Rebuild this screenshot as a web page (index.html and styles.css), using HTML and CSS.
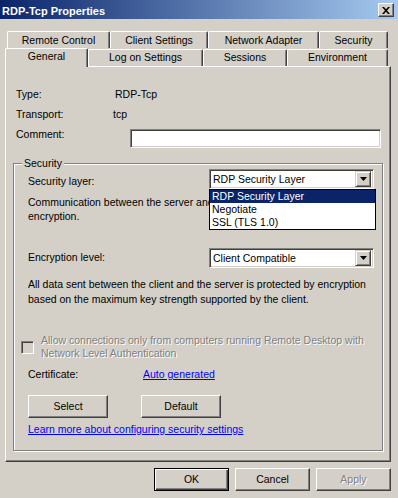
FILE: index.html
```html
<!DOCTYPE html>
<html>
<head>
<meta charset="utf-8">
<title>RDP-Tcp Properties</title>
<link rel="stylesheet" href="styles.css">
</head>
<body>
<div class="window">
  <div class="titlebar">
    <span class="title">RDP-Tcp Properties</span>
    <span class="close"><svg width="8" height="7" viewBox="0 0 8 7"><path d="M0 0h2l2 2.2L6 0h2L5 3.5 8 7H6L4 4.8 2 7H0l3-3.5z" fill="#000"/></svg></span>
  </div>
  <div class="tabs">
    <div class="tabrow back">
      <div class="tab t-remote">Remote Control</div>
      <div class="tab t-client">Client Settings</div>
      <div class="tab t-network">Network Adapter</div>
      <div class="tab t-security">Security</div>
    </div>
    <div class="tabrow front">
      <div class="tab t-general active">General</div>
      <div class="tab t-logon">Log on Settings</div>
      <div class="tab t-sessions">Sessions</div>
      <div class="tab t-env">Environment</div>
    </div>
  </div>
  <div class="panel">
    <div class="info"><span class="info-label">Type:</span><span>RDP-Tcp</span></div>
    <div class="info"><span class="info-label">Transport:</span><span class="tcp">tcp</span></div>
    <div class="info comment"><span class="info-label">Comment:</span><div class="textbox"></div></div>
    <fieldset class="group">
      <legend>Security</legend>
      <div class="field layer-row">
        <span class="field-label">Security layer:</span>
        <div class="combo-wrap">
          <div class="combo"><span class="combo-text">RDP Security Layer</span><span class="combo-btn"><svg width="7" height="4" viewBox="0 0 7 4"><path d="M0 0h7L3.5 4z" fill="#000"/></svg></span></div>
          <ul class="dropdown">
            <li class="sel">RDP Security Layer</li>
            <li>Negotiate</li>
            <li>SSL (TLS 1.0)</li>
          </ul>
        </div>
      </div>
      <p class="desc desc1">Communication between the server and the client will use native RDP<br>encryption.</p>
      <div class="field enc-row">
        <span class="field-label">Encryption level:</span>
        <div class="combo-wrap">
          <div class="combo"><span class="combo-text">Client Compatible</span><span class="combo-btn"><svg width="7" height="4" viewBox="0 0 7 4"><path d="M0 0h7L3.5 4z" fill="#000"/></svg></span></div>
        </div>
      </div>
      <p class="desc desc2">All data sent between the client and the server is protected by encryption<br>based on the maximum key strength supported by the client.</p>
      <div class="check-row">
        <span class="checkbox"></span>
        <span class="disabled-text">Allow connections only from computers running Remote Desktop with<br>Network Level Authentication</span>
      </div>
      <div class="cert-row"><span class="cert-label">Certificate:</span><span class="link">Auto generated</span></div>
      <div class="btn-row">
        <span class="btn btn-cert">Select</span>
        <span class="btn btn-cert">Default</span>
      </div>
      <div class="learn"><span class="link">Learn more about configuring security settings</span></div>
    </fieldset>
  </div>
  <div class="footer">
    <span class="btn btn-dlg btn-default">OK</span>
    <span class="btn btn-dlg">Cancel</span>
    <span class="btn btn-dlg disabled">Apply</span>
  </div>
</div>
</body>
</html>
```

FILE: styles.css
```css
* { box-sizing: border-box; }
html, body { margin: 0; padding: 0; }
body {
  background: #d4d0c8;
  font-family: "Liberation Sans", Arial, sans-serif;
  font-size: 10.5px;
  line-height: 13px;
  color: #000;
}
.window {
  width: 398px;
  height: 498px;
  display: flex;
  flex-direction: column;
  overflow: hidden;
}
.titlebar {
  height: 19px;
  flex: none;
  background: linear-gradient(to right, #0a246a, #a6caf0);
  display: flex;
  align-items: flex-start;
  justify-content: space-between;
  padding: 5px 4px 0 2px;
}
.title { color: #fff; font-weight: bold; font-size: 11px; line-height: 13px; }
.close {
  width: 16px;
  height: 14px;
  margin-top: -2px;
  background: #d4d0c8;
  border: 1px solid;
  border-color: #fff #404040 #404040 #fff;
  box-shadow: inset -1px -1px #808080;
  display: flex;
  align-items: center;
  justify-content: center;
}

/* tabs */
.tabs { margin-top: 12px; flex: none; }
.tabrow { display: flex; align-items: flex-end; }
.back { height: 17px; padding-left: 7px; }
.front { height: 18px; padding-left: 5px; position: relative; z-index: 1; }
.tab {
  height: 100%;
  text-align: center;
  white-space: nowrap;
  background: #d4d0c8;
  border-top: 1px solid #fff;
  border-left: 1px solid #fff;
  border-right: 1px solid #404040;
  box-shadow: inset -1px 0 #808080;
  border-radius: 2px 2px 0 0;
  padding-top: 2px;
}
.front .tab { height: 17px; padding-top: 1px; }
.front .tab.active { height: 19px; margin-bottom: -1px; padding-top: 1px; }
.t-remote { width: 103px; }
.t-client { width: 98px; }
.t-network { width: 111px; }
.t-security { width: 69px; }
.t-general { width: 83px; }
.t-logon { width: 115px; }
.t-sessions { width: 84px; }
.t-env { width: 101px; }

/* panel */
.panel {
  flex: none;
  margin-left: 5px;
  width: 386px;
  height: 396px;
  border: 1px solid;
  border-color: #fff #404040 #404040 #fff;
  box-shadow: inset -1px -1px #808080;
  padding: 21px 0 0 10px;
}
.info { display: flex; align-items: flex-start; min-height: 13px; margin-bottom: 7px; }
.info-label { width: 99px; }
.tcp { margin-left: -2px; }
.comment .info-label { width: 114px; }
.textbox {
  width: 251px;
  height: 19px;
  margin-top: 1px;
  background: #fff;
  border: 1px solid;
  border-color: #808080 #fff #fff #808080;
  box-shadow: inset 1px 1px #404040, inset -1px -1px #d4d0c8;
}
.comment { margin-bottom: 0; }

/* group */
.group {
  margin: 9px 0 0 -3px;
  width: 370px;
  min-inline-size: 0;
  border: 1px solid #808080;
  box-shadow: 1px 1px 0 #fff, inset 1px 1px 0 #fff;
  padding: 0 0 14px 14px;
}
.group legend {
  padding: 0 2px;
  margin-left: -6px;
  line-height: 12px;
  background: #d4d0c8;
}
.field { display: flex; align-items: flex-start; }
.field-label { width: 181px; }
.layer-row .field-label { margin-top: 6px; }
.enc-row { margin-top: 25px; }
.enc-row .field-label { margin-top: 3px; }
.combo-wrap { position: relative; width: 165px; }
.combo {
  height: 20px;
  background: #fff;
  border: 1px solid;
  border-color: #808080 #fff #fff #808080;
  box-shadow: inset 1px 1px #404040, inset -1px -1px #d4d0c8;
  display: flex;
  align-items: center;
  justify-content: space-between;
  padding: 2px 2px 2px 2px;
}
.combo-text { padding-left: 1px; white-space: nowrap; }
.combo-btn {
  width: 16px;
  height: 16px;
  background: #d4d0c8;
  border: 1px solid;
  border-color: #d4d0c8 #404040 #404040 #d4d0c8;
  box-shadow: inset 1px 1px #fff, inset -1px -1px #808080;
  display: flex;
  align-items: center;
  justify-content: center;
}
.dropdown {
  position: absolute;
  top: 20px;
  left: 0;
  width: 167px;
  margin: 0;
  padding: 0;
  list-style: none;
  background: #fff;
  border: 1px solid #000;
  z-index: 2;
}
.dropdown li { height: 13px; line-height: 13px; padding-left: 2px; white-space: nowrap; }
.dropdown li.sel { background: #0a246a; color: #fff; }
.desc { margin: 0; white-space: nowrap; }
.desc1 { margin-top: 6px; line-height: 14px; }
.desc2 { margin-top: 9px; line-height: 15px; }
.check-row { display: flex; align-items: center; margin: 27px 0 0 -7px; gap: 7px; }
.checkbox {
  width: 13px;
  height: 13px;
  flex: none;
  background: #d4d0c8;
  border: 1px solid;
  border-color: #808080 #fff #fff #808080;
  box-shadow: inset 1px 1px #404040, inset -1px -1px #d4d0c8;
}
.disabled-text { color: #808080; text-shadow: 1px 1px 0 #fff; white-space: nowrap; }
.cert-row { display: flex; margin-top: 8px; }
.cert-label { width: 115px; }
.link { color: #0000ff; text-decoration: underline; white-space: nowrap; }
.btn-row { display: flex; gap: 33px; margin-top: 14px; }
.btn {
  display: flex;
  align-items: center;
  justify-content: center;
  height: 23px;
  background: #d4d0c8;
  border: 1px solid;
  border-color: #fff #404040 #404040 #fff;
  box-shadow: inset -1px -1px #808080;
}
.btn-cert { width: 80px; }
.learn { margin-top: 5px; }

/* footer */
.footer {
  flex: none;
  display: flex;
  justify-content: flex-end;
  gap: 6px;
  margin-top: 6px;
  padding-right: 7px;
}
.btn-dlg { width: 75px; }
.btn-default {
  border-color: #000;
  box-shadow: inset 1px 1px #fff, inset -1px -1px #404040, inset -2px -2px #808080;
}
.disabled { color: #808080; text-shadow: 1px 1px 0 #fff; }
```
